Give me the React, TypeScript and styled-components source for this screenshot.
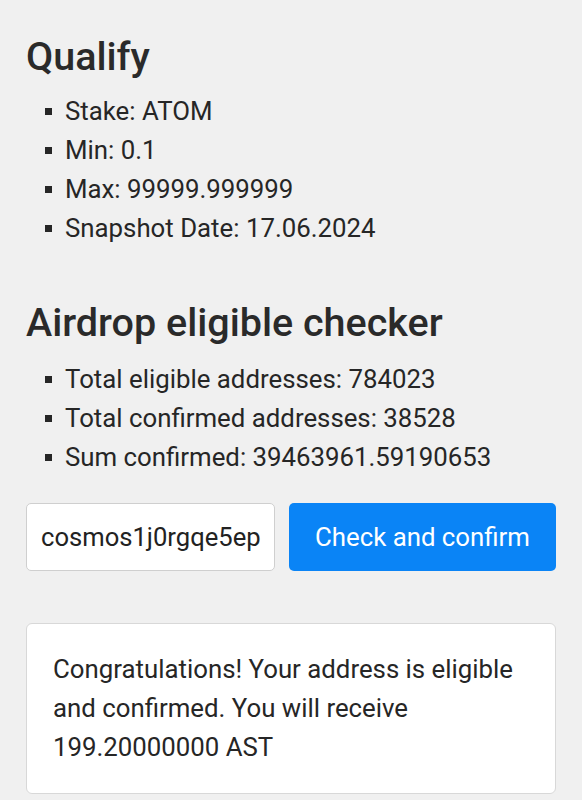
import React, { FC } from 'react'
import styled, { createGlobalStyle } from 'styled-components'

const GlobalStyle = createGlobalStyle`
  html, body {
    margin: 0;
    padding: 0;
    background: #f0f0f0;
  }

  body {
    font-family: Roboto, 'Liberation Sans', sans-serif;
    color: #262626;
  }
`

const Page = styled.main`
  padding: 33px 26px 0 26px;
  display: flex;
  flex-direction: column;
`

const Heading = styled.h2<{ $spaced?: boolean }>`
  margin: ${({ $spaced }) => ($spaced ? '51px 0 13px' : '0 0 11px')} 0;
  font-size: 39.5px;
  line-height: 48px;
  font-weight: 500;
  color: #2a2a2a;
`

const List = styled.ul`
  list-style: none;
  margin: 0;
  padding: 0 0 0 19px;
`

const Item = styled.li`
  position: relative;
  padding-left: 20px;
  font-size: 25.8px;
  line-height: 39px;
  color: #262626;

  &::before {
    content: '';
    position: absolute;
    left: 0;
    top: 16px;
    width: 7px;
    height: 7px;
    background: #262626;
  }
`

const CheckRow = styled.form`
  display: flex;
  gap: 14px;
  margin-top: 26px;
`

const AddressInput = styled.input`
  box-sizing: border-box;
  width: 249px;
  height: 68px;
  padding: 0 4px 0 14px;
  border: 1px solid #cfcfcf;
  border-radius: 5px;
  background: #fff;
  font-family: inherit;
  font-size: 25.6px;
  color: #222;
  outline: none;
`

const ConfirmButton = styled.button`
  box-sizing: border-box;
  width: 267px;
  height: 68px;
  border: none;
  border-radius: 5px;
  background: #0a84f6;
  color: #fff;
  font-family: inherit;
  font-size: 25.8px;
  cursor: pointer;
`

const ResultCard = styled.div`
  box-sizing: border-box;
  width: 530px;
  margin-top: 52px;
  padding: 26px 26px;
  background: #fff;
  border: 1px solid #d8d8d8;
  border-radius: 6px;
  font-size: 25.8px;
  line-height: 39px;
  color: #262626;
`

const qualify = [
  'Stake: ATOM',
  'Min: 0.1',
  'Max: 99999.999999',
  'Snapshot Date: 17.06.2024',
]

const stats = [
  'Total eligible addresses: 784023',
  'Total confirmed addresses: 38528',
  'Sum confirmed: 39463961.59190653',
]

const App: FC = () => (
  <>
    <GlobalStyle />
    <Page>
      <Heading>Qualify</Heading>
      <List>
        {qualify.map((text) => (
          <Item key={text}>{text}</Item>
        ))}
      </List>

      <Heading $spaced>Airdrop eligible checker</Heading>
      <List>
        {stats.map((text) => (
          <Item key={text}>{text}</Item>
        ))}
      </List>

      <CheckRow onSubmit={(e) => e.preventDefault()}>
        <AddressInput defaultValue='cosmos1j0rgqe5ep' />
        <ConfirmButton type='submit'>Check and confirm</ConfirmButton>
      </CheckRow>

      <ResultCard>
        Congratulations! Your address is eligible and confirmed. You will
        receive 199.20000000 AST
      </ResultCard>
    </Page>
  </>
)

export default App
